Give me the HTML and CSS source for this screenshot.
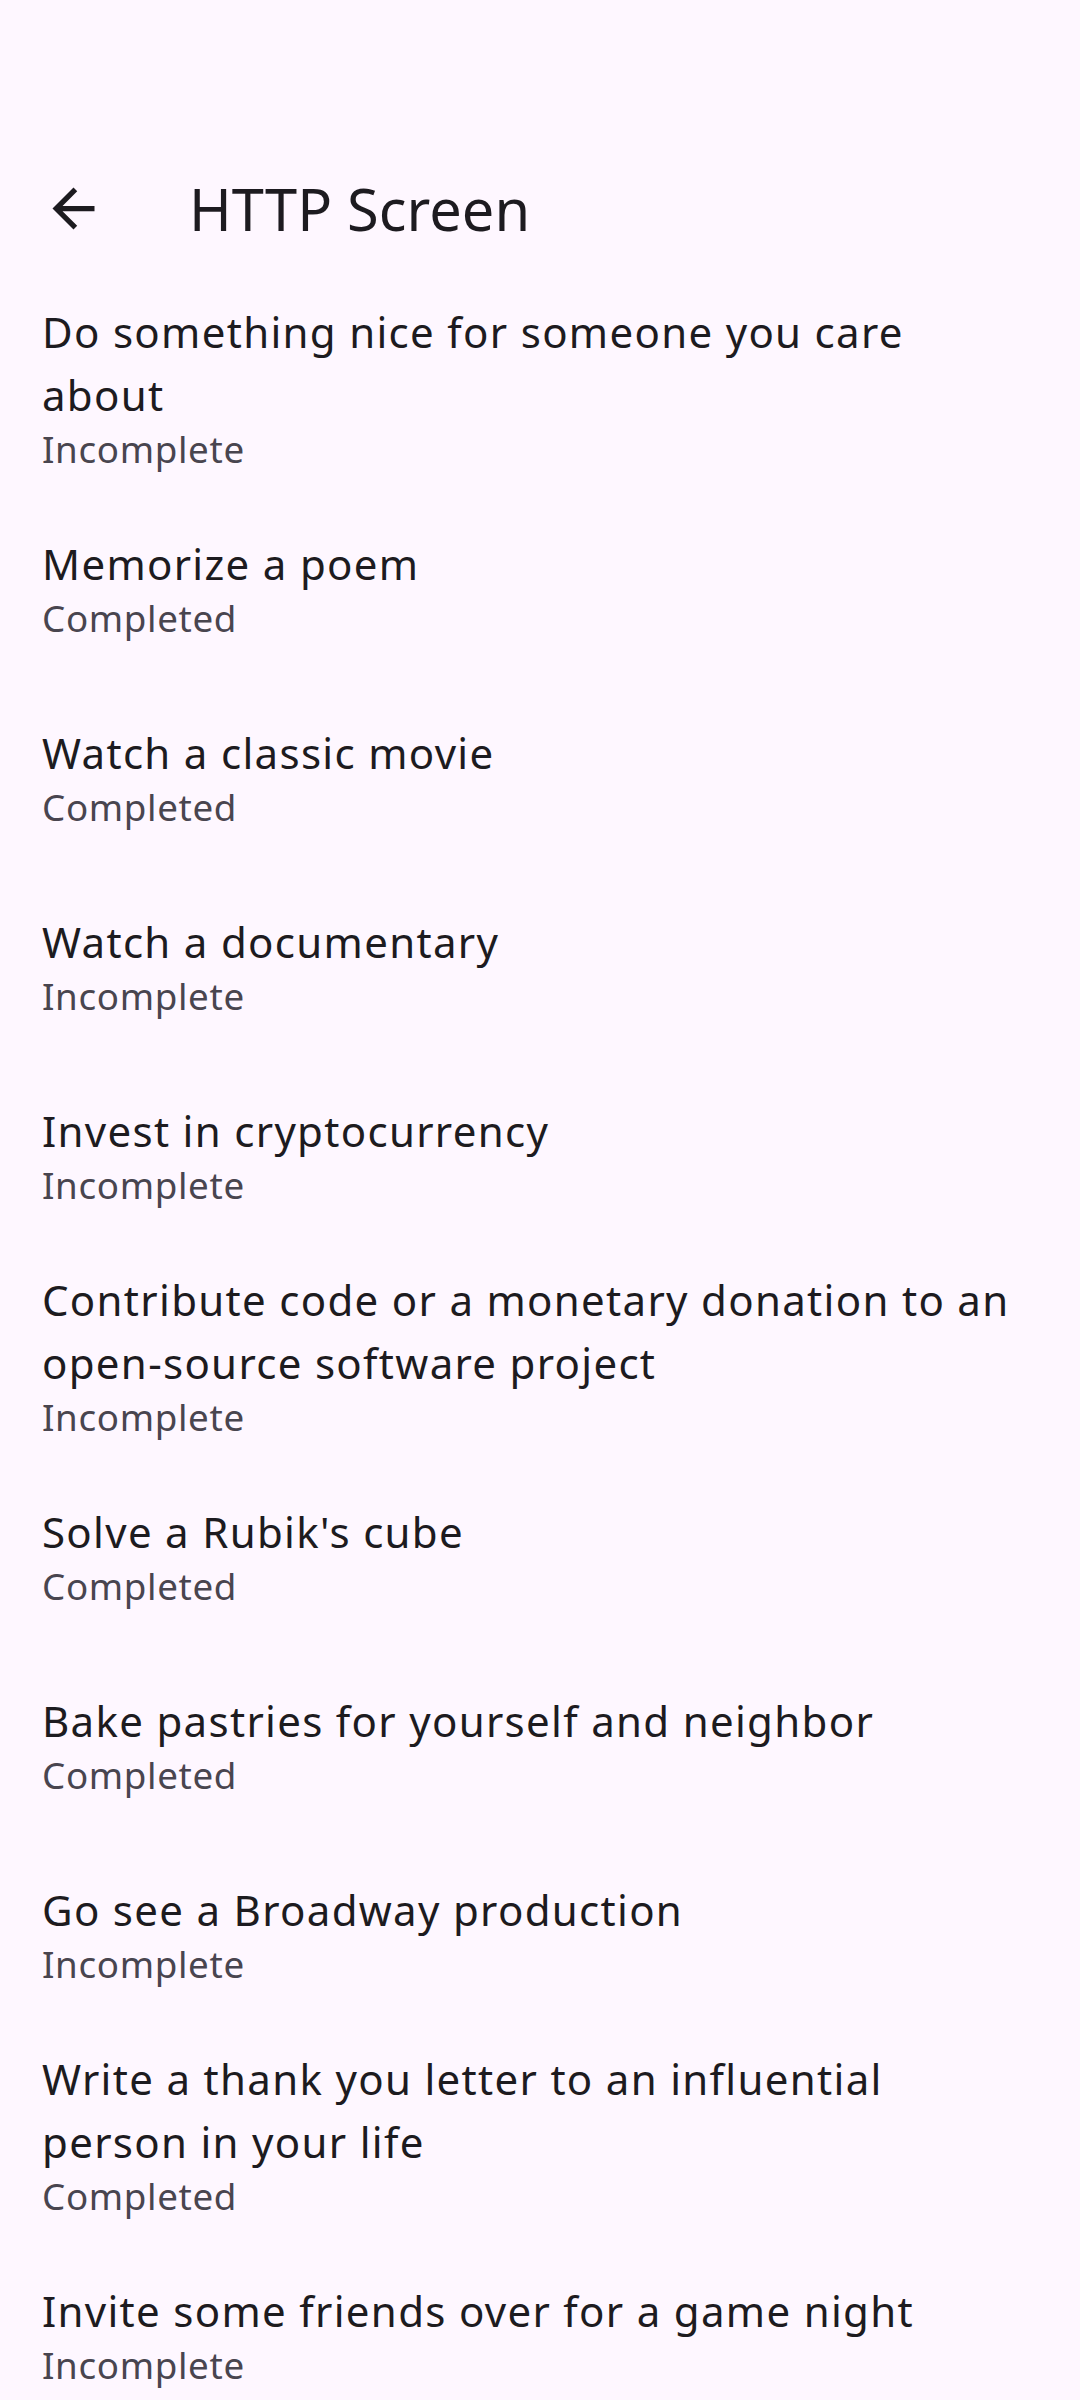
FILE: index.html
```html
<!DOCTYPE html>
<html lang="en">
<head>
<meta charset="utf-8">
<title>HTTP Screen</title>
<link rel="stylesheet" href="styles.css">
</head>
<body>
<div class="screen">
  <div class="status-bar"></div>
  <header class="app-bar">
    <button class="nav-button" aria-label="Back">
      <svg class="nav-icon" viewBox="0 0 24 24" width="63" height="63" aria-hidden="true">
        <path d="M20 11H7.83l5.59-5.59L12 4l-8 8 8 8 1.41-1.41L7.83 13H20v-2z"/>
      </svg>
    </button>
    <h1 class="app-title">HTTP Screen</h1>
  </header>
  <ul class="todo-list">
    <li class="item"><span class="headline">Do something nice for someone you care about</span><span class="supporting">Incomplete</span></li>
    <li class="item"><span class="headline">Memorize a poem</span><span class="supporting">Completed</span></li>
    <li class="item"><span class="headline">Watch a classic movie</span><span class="supporting">Completed</span></li>
    <li class="item"><span class="headline">Watch a documentary</span><span class="supporting">Incomplete</span></li>
    <li class="item"><span class="headline">Invest in cryptocurrency</span><span class="supporting">Incomplete</span></li>
    <li class="item"><span class="headline">Contribute code or a monetary donation to an open-source software project</span><span class="supporting">Incomplete</span></li>
    <li class="item"><span class="headline">Solve a Rubik's cube</span><span class="supporting">Completed</span></li>
    <li class="item"><span class="headline">Bake pastries for yourself and neighbor</span><span class="supporting">Completed</span></li>
    <li class="item"><span class="headline">Go see a Broadway production</span><span class="supporting">Incomplete</span></li>
    <li class="item"><span class="headline">Write a thank you letter to an influential person in your life</span><span class="supporting">Completed</span></li>
    <li class="item"><span class="headline">Invite some friends over for a game night</span><span class="supporting">Incomplete</span></li>
  </ul>
</div>
</body>
</html>
```
FILE: styles.css
```css
html, body {
  margin: 0;
  padding: 0;
  background: #FEF7FF;
}

body {
  font-family: "Noto Sans", "Open Sans", sans-serif;
  color: #1D1B20;
}

.screen {
  width: 1080px;
  height: 2400px;
  overflow: hidden;
  background: #FEF7FF;
}

.status-bar {
  height: 137px;
}

.app-bar {
  height: 143px;
  display: flex;
  align-items: center;
  padding-left: 42px;
}

.nav-button {
  width: 63px;
  height: 63px;
  padding: 0;
  margin: 0;
  border: 0;
  background: transparent;
  display: flex;
}

.nav-icon {
  display: block;
  fill: #1D1B20;
}

.app-title {
  margin: 0 0 0 84px;
  font-size: 57.75px;
  line-height: 73.5px;
  font-weight: 400;
  letter-spacing: 0;
  color: #1D1B20;
}

.todo-list {
  list-style: none;
  margin: 0;
  padding: 0;
}

.item {
  display: flex;
  flex-direction: column;
  justify-content: center;
  min-height: 189px;
  box-sizing: border-box;
  padding: 20px 56px 20px 42px;
}

.headline {
  font-size: 42px;
  line-height: 63px;
  letter-spacing: 1.3125px;
  color: #1D1B20;
}

.supporting {
  font-size: 36.75px;
  line-height: 46px;
  letter-spacing: 0.656px;
  color: #49454F;
}
```
